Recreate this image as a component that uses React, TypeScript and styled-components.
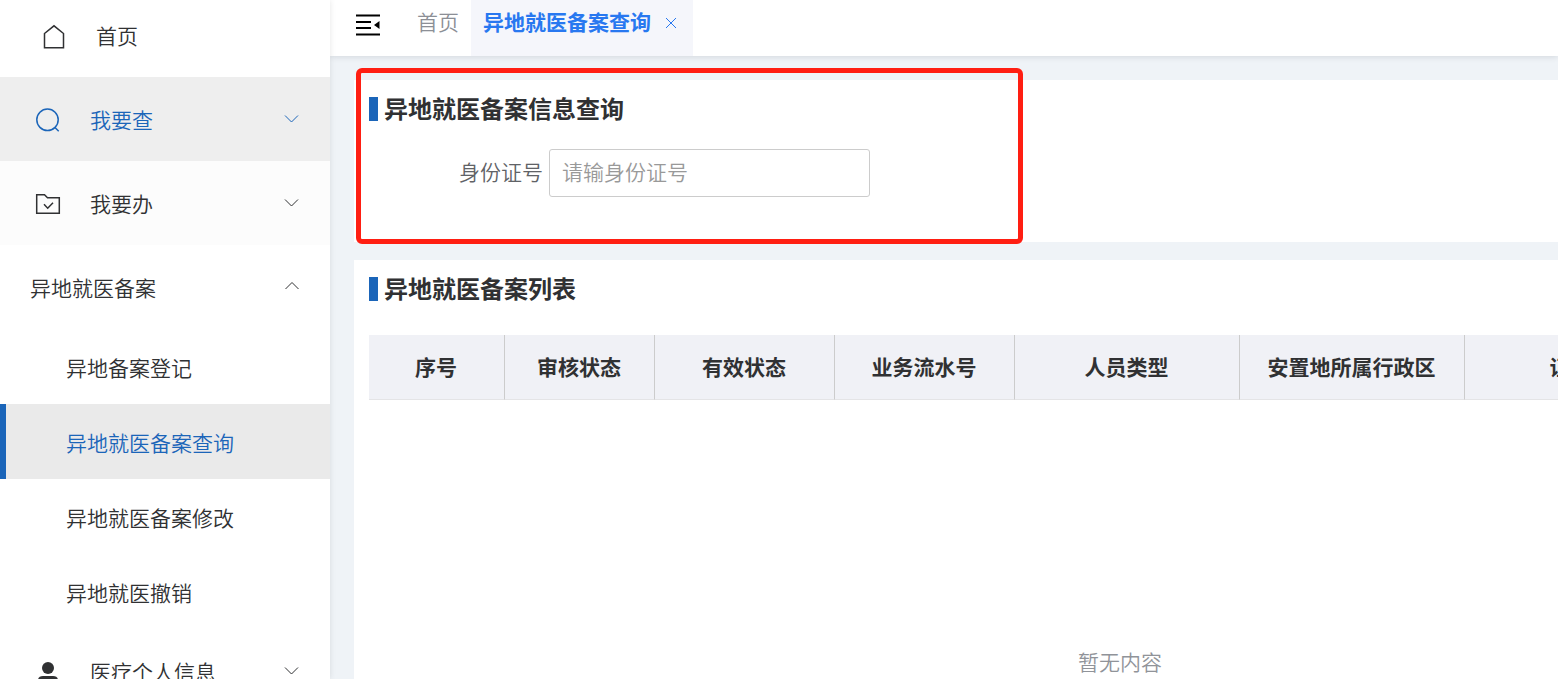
import React from "react";
import styled, { createGlobalStyle, css } from "styled-components";

const GlobalStyle = createGlobalStyle`
  *, *::before, *::after { box-sizing: border-box; }
  body {
    margin: 0;
    background: #eff3f7;
    color: #303133;
    font-family: "Noto Sans CJK SC", "Liberation Sans", sans-serif;
    font-size: 21px;
    line-height: 32px;
  }
  button, input { font: inherit; color: inherit; }
  h2, ul { margin: 0; padding: 0; font-size: inherit; }
`;

const Shell = styled.div`
  display: flex;
  height: 100vh;
  overflow: hidden;
`;

const Sidebar = styled.nav`
  position: relative;
  z-index: 2;
  flex: 0 0 330px;
  overflow: hidden;
  background: #fff;
  box-shadow: 0 0 6px rgba(0, 0, 0, 0.1);
`;

const HomeLink = styled.a`
  display: flex;
  align-items: center;
  gap: 30px;
  height: 77px;
  padding: 0 30px 8px 42px;
  color: inherit;
  font-weight: 350;
  text-decoration: none;
`;

const MenuButton = styled.button<{ $tone?: "active" | "muted"; $plain?: boolean }>`
  display: flex;
  align-items: center;
  width: 100%;
  height: 84px;
  padding: 0 30px 0 ${(p) => (p.$plain ? 30 : 35)}px;
  border: 0;
  background: #fff;
  font-weight: 350;
  text-align: left;
  cursor: pointer;
  ${(p) => p.$tone === "active" && css`background: #eee; color: #1b65b9;`}
  ${(p) => p.$tone === "muted" && css`background: #fcfcfc;`}
`;

const MenuIcon = styled.span`
  display: flex;
  flex: 0 0 55px;
`;

const MenuText = styled.span`
  flex: 1;
`;

const SubMenu = styled.ul`
  list-style: none;
`;

const SubLink = styled.a<{ $active?: boolean }>`
  display: flex;
  align-items: center;
  height: 75px;
  padding: 0 20px 0 60px;
  border-left: 6px solid ${(p) => (p.$active ? "#1b65b9" : "transparent")};
  background: ${(p) => (p.$active ? "#eaeaea" : "transparent")};
  color: ${(p) => (p.$active ? "#1b65b9" : "inherit")};
  font-weight: 350;
  text-decoration: none;
`;

const Main = styled.main`
  flex: 1;
  min-width: 0;
`;

const TabBar = styled.header`
  position: relative;
  z-index: 1;
  display: flex;
  height: 56px;
  padding-left: 24px;
  background: #fff;
  box-shadow: 0 1px 6px rgba(0, 21, 41, 0.12);
`;

const FoldButton = styled.button`
  display: flex;
  width: 51px;
  padding: 12px 0 0;
  border: 0;
  background: none;
  cursor: pointer;
`;

const Tab = styled.div<{ $active?: boolean }>`
  display: flex;
  align-items: center;
  gap: 12px;
  padding: 0 12px 14px;
  color: ${(p) => (p.$active ? "#2878f0" : "#8c8f96")};
  background: ${(p) => (p.$active ? "#f5f6fb" : "transparent")};
  font-weight: ${(p) => (p.$active ? 700 : 350)};
`;

const TabLink = styled.a`
  color: inherit;
  text-decoration: none;
`;

const CloseButton = styled.button`
  display: flex;
  padding: 4px 4px 0 2px;
  border: 0;
  background: none;
  cursor: pointer;
`;

const Content = styled.div`
  display: flex;
  flex-direction: column;
  gap: 18px;
  padding: 24px 0 0 24px;
`;

const Card = styled.section`
  position: relative;
  padding: 13px 0 45px 15px;
  background: #fff;
`;

const CardTitle = styled.h2`
  display: flex;
  align-items: center;
  gap: 6px;
  height: 32px;
  padding-bottom: 3px;
  font-size: 24px;
  font-weight: 700;

  &::before {
    content: "";
    width: 9px;
    height: 24px;
    margin-top: 3px;
    background: #1b65b9;
  }
`;

const Field = styled.div`
  display: flex;
  align-items: center;
  gap: 6px;
  padding: 24px 0 0 90px;
`;

const FieldLabel = styled.label`
  padding-bottom: 4px;
  color: #606266;
  font-weight: 350;
`;

const TextInput = styled.input`
  width: 321px;
  height: 48px;
  padding: 0 12px 4px;
  border: 1px solid #ccc;
  border-radius: 3px;
  background: #fff;
  font-weight: 350;

  &::placeholder { color: #999; opacity: 1; }
`;

const Highlight = styled.div`
  position: absolute;
  top: -12px;
  left: 2px;
  width: 667px;
  height: 176px;
  border: 5px solid #ff1e12;
  border-radius: 6px;
  pointer-events: none;
`;

const TableScroller = styled.div`
  margin-top: 30px;
  overflow-x: auto;
`;

const Table = styled.table`
  width: 1502px;
  table-layout: fixed;
  border-collapse: separate;
  border-spacing: 0;
`;

const HeadCell = styled.th`
  height: 65px;
  padding: 0 1px 2px 0;
  border-right: 1px solid #ccc;
  border-bottom: 1px solid #e4e4e6;
  background: #f0f1f6;
  font-weight: 700;
`;

const EmptyCell = styled.td`
  height: 526px;
  padding: 0 0 4px;
  color: #909399;
  font-weight: 350;
  text-align: center;
`;

const Svg = (p: React.SVGProps<SVGSVGElement>) => (
  <svg fill="none" stroke="currentColor" strokeWidth={1.5} aria-hidden="true" {...p} />
);

const HomeIcon = () => (
  <Svg width={24} height={30} viewBox="0 -4 24 30">
    <path d="M2.500 9.500 12 1.800l9.500 7.700v14.200h-19z" />
  </Svg>
);

const SearchIcon = () => (
  <Svg width={26} height={26} viewBox="0 -1 26 26">
    <circle cx="12.5" cy="12.8" r="10.7" />
    <path d="m20 20.500 3.700 3.700" />
  </Svg>
);

const FolderIcon = () => (
  <Svg width={26} height={26} viewBox="0 -2 26 26">
    <path d="M1.700 21.300V2.700h7.800l3 3h11.800v15.600z" />
    <path d="m9 12.300 3.700 3.900 5.300-5.500" />
  </Svg>
);

const UserIcon = () => (
  <Svg width={26} height={26} viewBox="0 0 26 26" fill="currentColor" stroke="none">
    <circle cx="13" cy="10" r="6" />
    <path d="M3 25v-2.500q0-4.500 5-4.500h10q5 0 5 4.500V25z" />
  </Svg>
);

const Chevron = ({ up }: { up?: boolean }) => (
  <Svg width={16} height={12} viewBox="0 0 16 12" strokeWidth={1}>
    <path d={up ? "m1.500 8 6.500-6.500 6.500 6.500" : "m1 2.500 6.500 6.500 6.500-6.500"} />
  </Svg>
);

const FoldIcon = () => (
  <Svg width={26} height={26} viewBox="0 0 26 26" stroke="#000" strokeWidth={2}>
    <path d="M2 3.500h24M2 10h15M2 16h15M2 22.500h24" />
    <path d="m20 13 5.500-4v8z" fill="#000" stroke="none" />
  </Svg>
);

const CloseIcon = () => (
  <Svg width={12} height={12} viewBox="0 0 12 12" strokeWidth={1}>
    <path d="m1 1 10 10M11 1 1 11" />
  </Svg>
);

const records = [
  { label: "异地备案登记" },
  { label: "异地就医备案查询", active: true },
  { label: "异地就医备案修改" },
  { label: "异地就医撤销" },
];

const columns = [
  { label: "序号", width: 136 },
  { label: "审核状态", width: 150 },
  { label: "有效状态", width: 180 },
  { label: "业务流水号", width: 180 },
  { label: "人员类型", width: 225 },
  { label: "安置地所属行政区", width: 225 },
  { label: "证件号码", width: 255 },
  { label: "", width: 151 },
];

export default function App() {
  return (
    <>
      <GlobalStyle />
      <Shell>
        <Sidebar>
          <HomeLink href="#home">
            <HomeIcon />
            首页
          </HomeLink>
          <MenuButton $tone="active">
            <MenuIcon><SearchIcon /></MenuIcon>
            <MenuText>我要查</MenuText>
            <Chevron />
          </MenuButton>
          <MenuButton $tone="muted">
            <MenuIcon><FolderIcon /></MenuIcon>
            <MenuText>我要办</MenuText>
            <Chevron />
          </MenuButton>
          <MenuButton $plain aria-expanded="true">
            <MenuText>异地就医备案</MenuText>
            <Chevron up />
          </MenuButton>
          <SubMenu>
            {records.map((r) => (
              <li key={r.label}>
                <SubLink href="#record" $active={r.active}>{r.label}</SubLink>
              </li>
            ))}
          </SubMenu>
          <MenuButton>
            <MenuIcon><UserIcon /></MenuIcon>
            <MenuText>医疗个人信息</MenuText>
            <Chevron />
          </MenuButton>
        </Sidebar>
        <Main>
          <TabBar>
            <FoldButton aria-label="收起菜单"><FoldIcon /></FoldButton>
            <Tab><TabLink href="#home">首页</TabLink></Tab>
            <Tab $active>
              <TabLink href="#query">异地就医备案查询</TabLink>
              <CloseButton aria-label="关闭"><CloseIcon /></CloseButton>
            </Tab>
          </TabBar>
          <Content>
            <Card>
              <CardTitle>异地就医备案信息查询</CardTitle>
              <Field>
                <FieldLabel htmlFor="id-number">身份证号</FieldLabel>
                <TextInput id="id-number" placeholder="请输身份证号" />
              </Field>
              <Highlight />
            </Card>
            <Card>
              <CardTitle>异地就医备案列表</CardTitle>
              <TableScroller>
                <Table>
                  <colgroup>
                    {columns.map((c) => <col key={c.label} width={c.width} />)}
                  </colgroup>
                  <thead>
                    <tr>
                      {columns.map((c) => <HeadCell key={c.label} scope="col">{c.label}</HeadCell>)}
                    </tr>
                  </thead>
                  <tbody>
                    <tr><EmptyCell colSpan={columns.length}>暂无内容</EmptyCell></tr>
                  </tbody>
                </Table>
              </TableScroller>
            </Card>
          </Content>
        </Main>
      </Shell>
    </>
  );
}
